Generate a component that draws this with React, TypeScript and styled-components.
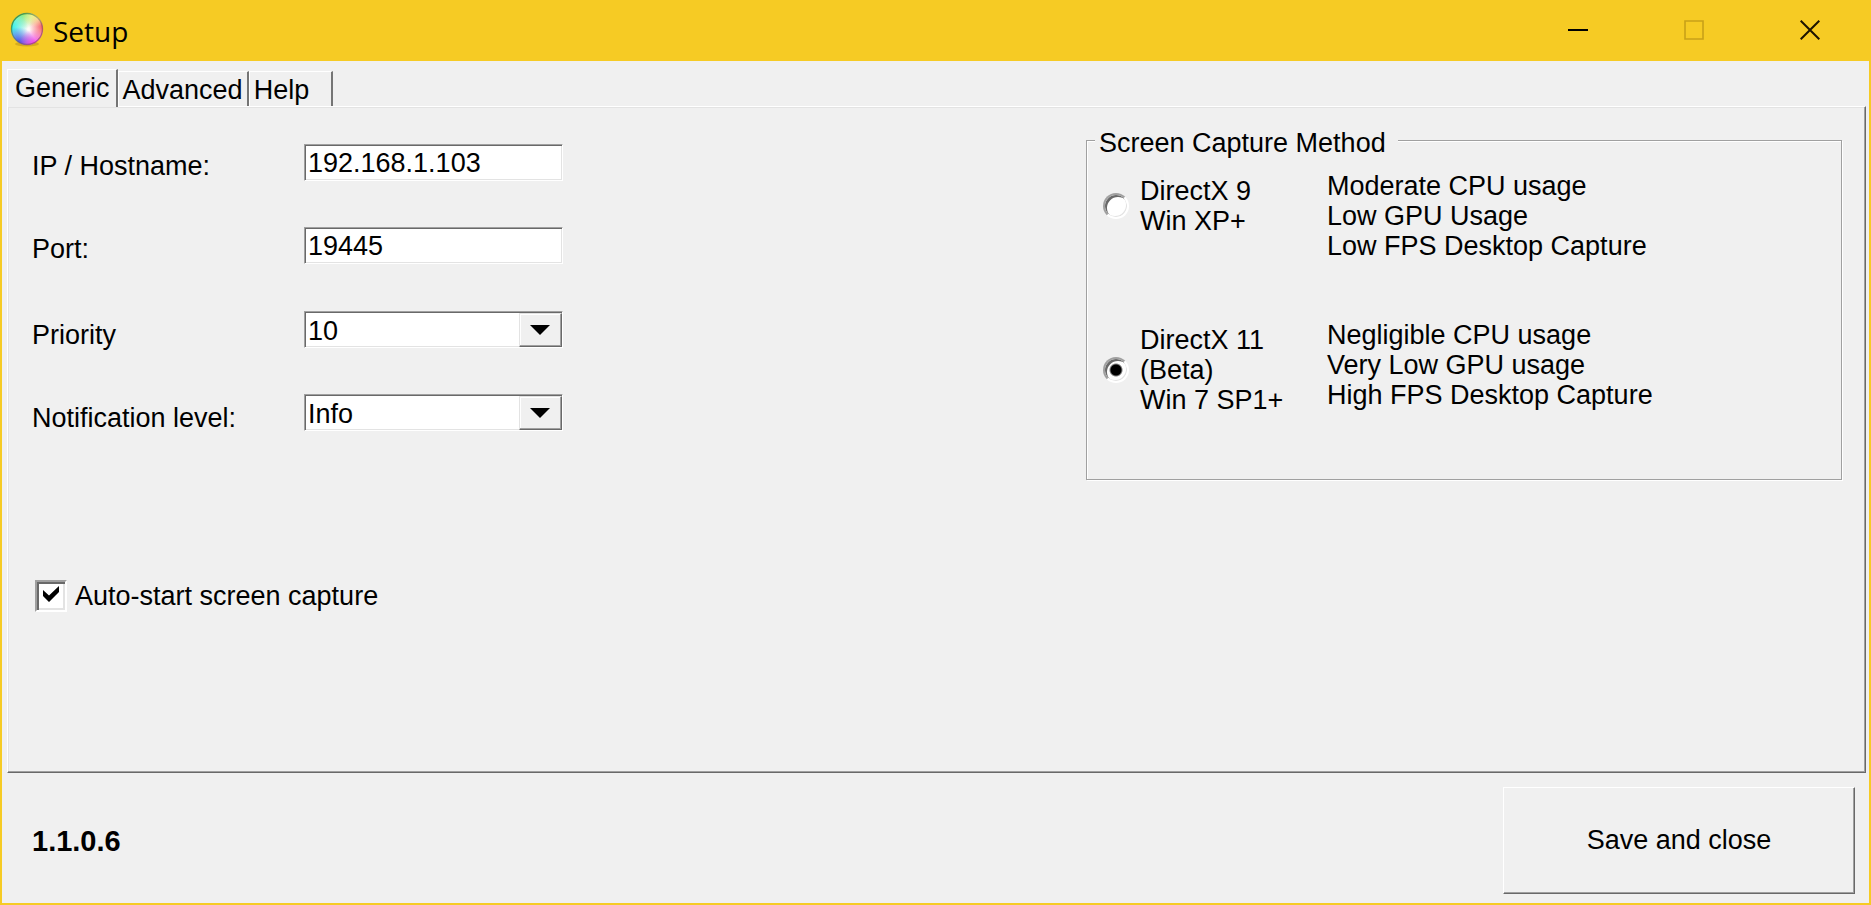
import React, { useState } from "react";
import styled, { createGlobalStyle } from "styled-components";

const face = "#f0f0f0";
const accent = "#f6cb24";
const shadow = "#a0a0a0";
const darkShadow = "#696969";
const light = "#e3e3e3";

const GlobalStyle = createGlobalStyle`
  *, *::before, *::after { box-sizing: border-box; }
  body {
    margin: 0;
    background: ${face};
    color: #000;
    font: 27px/31px "Liberation Sans", Arial, sans-serif;
  }
  button, input, select { font: inherit; color: inherit; border-radius: 0; }
`;

const Window = styled.div`
  display: flex;
  flex-direction: column;
  min-height: 100vh;
  background: ${face};
  border: 2px solid ${accent};
  border-top: 0;
`;

const TitleBar = styled.header`
  display: flex;
  align-items: flex-start;
  height: 61px;
  padding: 0 1px 0 8px;
  background: ${accent};
  & > svg { margin-top: 12px; }
`;

const Title = styled.h1`
  flex: 1;
  margin: 0;
  padding: 12px 0 0 7px;
  font: 400 28px/38px "Open Sans", "Noto Sans", sans-serif;
`;

const CaptionButton = styled.button`
  display: grid;
  place-items: center;
  width: 116px;
  height: 60px;
  padding: 0;
  border: 0;
  background: transparent;
  color: #1c1400;
  &:disabled { color: #c9a118; }
`;

const TabList = styled.div`
  display: flex;
  align-items: flex-end;
  padding: 8px 5px 0;
`;

const Tab = styled.button<{ $selected: boolean }>`
  position: relative;
  z-index: ${(p) => (p.$selected ? 1 : 0)};
  height: ${(p) => (p.$selected ? 38 : 35)}px;
  min-width: 84px;
  margin-bottom: ${(p) => (p.$selected ? -1 : 0)}px;
  padding: ${(p) => (p.$selected ? "3px 6px 0 7px" : "3px 4px 0 4px")};
  display: flex;
  align-items: flex-start;
  background: ${face};
  border: solid;
  border-width: 1px 2px 0 1px;
  border-color: #fff #757575 #fff #fff;
  outline: 0;
`;

const Panel = styled.main`
  flex: 1;
  display: flex;
  justify-content: space-between;
  margin: 0 3px 0 5px;
  padding: 0 23px 20px 24px;
  border: 1px solid;
  border-color: #fff ${darkShadow} ${darkShadow} #fff;
  box-shadow: inset -1px -1px ${shadow}, inset 1px 1px ${light};
`;

const Settings = styled.form`
  padding-top: 37px;
`;

const FieldGroup = styled.div<{ $labelDrop: number }>`
  display: grid;
  grid-template-columns: 272px 259px;
  grid-auto-rows: 37px;
  row-gap: 46px;
  margin-bottom: 47px;
  & > label { padding-top: ${(p) => p.$labelDrop}px; }
`;

const TextBox = styled.input`
  width: 100%;
  height: 37px;
  padding: 2px 3px 0;
  background: #fff;
  border: 1px solid;
  border-color: ${shadow} #fff #fff ${shadow};
  box-shadow: inset 1px 1px ${darkShadow}, inset -1px -1px ${light};
  outline: 0;
`;

const ComboBox = styled.div`
  display: grid;
  grid-template-columns: 1fr;
  & > * { grid-area: 1 / 1; }
`;

const Select = styled.select`
  appearance: none;
  width: 100%;
  height: 37px;
  padding: 3px 46px 0 3px;
  background: #fff;
  border: 1px solid;
  border-color: ${shadow} #fff #fff ${shadow};
  box-shadow: inset 1px 1px ${darkShadow}, inset -1px -1px ${light};
  outline: 0;
`;

const ComboArrow = styled.span`
  z-index: 1;
  justify-self: end;
  display: grid;
  place-items: center;
  width: 43px;
  height: 34px;
  margin: 2px 1px 0 0;
  padding-right: 2px;
  pointer-events: none;
  background: ${face};
  border: 1px solid;
  border-color: ${light} ${darkShadow} ${darkShadow} ${light};
  box-shadow: inset -1px -1px ${shadow}, inset 1px 1px #fff;
`;

const CheckLabel = styled.label`
  display: flex;
  align-items: center;
  gap: 8px;
  margin: 148px 0 0 3px;
  & > span:last-child { padding-top: 2px; }
`;

const CheckSlot = styled.span`
  display: grid;
  place-items: center;
  & > * { grid-area: 1 / 1; }
  svg { z-index: 1; margin-bottom: 3px; pointer-events: none; visibility: hidden; }
  input:checked + svg { visibility: visible; }
`;

const CheckBox = styled.input`
  appearance: none;
  width: 32px;
  height: 32px;
  margin: 0;
  background: #fff;
  border: 2px solid;
  border-color: ${shadow} #fff #fff ${shadow};
  box-shadow: inset 2px 2px ${darkShadow}, inset -2px -2px ${light};
`;

const GroupBox = styled.fieldset`
  flex: 0 1 756px;
  align-self: flex-start;
  min-width: 0;
  margin: 15px 0 0;
  padding: 12px 16px 64px;
  border: 1px solid ${shadow};
  box-shadow: 1px 1px #fff, inset 1px 1px #fff;
`;

const Legend = styled.legend`
  margin-left: -8px;
  padding: 6px 12px 0 4px;
  background: ${face};
`;

const Option = styled.div`
  display: grid;
  grid-template-columns: 224px 1fr;
  align-items: start;
  line-height: 30px;
  white-space: pre-line;
  & + & { margin-top: 59px; }
`;

const OptionLabel = styled.label`
  display: flex;
  align-items: center;
  gap: 11px;
  padding-top: 5px;
`;

const Radio = styled.input`
  appearance: none;
  flex: none;
  width: 26px;
  height: 26px;
  margin: 0;
  border: 2px solid;
  border-color: ${shadow} #fff #fff ${shadow};
  border-radius: 50%;
  background: #fff;
  box-shadow: inset 2px 2px ${darkShadow}, inset -1px -1px ${light};
  &:checked { background: radial-gradient(circle, #000 5px, #fff 7px); }
`;

const Description = styled.p`
  margin: 0;
  min-height: 90px;
`;

const Footer = styled.footer`
  display: flex;
  justify-content: space-between;
  align-items: center;
  padding: 14px 14px 9px 30px;
`;

const Version = styled.strong`
  padding-top: 2px;
  font-size: 29px;
`;

const SaveButton = styled.button`
  width: 352px;
  height: 107px;
  padding: 0;
  background: ${face};
  border: 1px solid;
  border-color: #fff ${darkShadow} ${darkShadow} #fff;
  box-shadow: inset -1px -1px ${shadow};
`;

const ballTints = [
  { id: "green", cx: 13, cy: 0, r: 17, color: "#70e868" },
  { id: "cyan", cx: 0, cy: 15, r: 18, color: "#18f0e4" },
  { id: "blue", cx: 8, cy: 33, r: 18, color: "#2030e0" },
  { id: "magenta", cx: 25, cy: 34, r: 17, color: "#f020e4" },
  { id: "red", cx: 36, cy: 14, r: 17, color: "#f43040" },
  { id: "yellow", cx: 25, cy: 2, r: 13, color: "#f8f080" },
];

const ColorBall = () => (
  <svg width="36" height="36" viewBox="0 0 36 36" aria-hidden="true">
    <defs>
      {ballTints.map((t) => (
        <radialGradient key={t.id} id={t.id} gradientUnits="userSpaceOnUse" cx={t.cx} cy={t.cy} r={t.r}>
          <stop offset="0" stopColor={t.color} />
          <stop offset=".4" stopColor={t.color} stopOpacity=".6" />
          <stop offset="1" stopColor={t.color} stopOpacity="0" />
        </radialGradient>
      ))}
      <linearGradient id="rim" x1="0" y1="0" x2="1" y2="1">
        <stop offset="0" stopColor="#1c8a40" />
        <stop offset=".5" stopColor="#6a7a40" stopOpacity=".5" />
        <stop offset="1" stopColor="#a02070" stopOpacity=".7" />
      </linearGradient>
    </defs>
    <ellipse cx="17" cy="32" rx="12" ry="2.500" fill="#8a6810" opacity=".3" />
    <circle cx="17" cy="17" r="16" fill="#fffaf8" />
    {ballTints.map((t) => (
      <circle key={t.id} cx="17" cy="17" r="16" fill={`url(#${t.id})`} />
    ))}
    <circle cx="17" cy="17" r="15.500" fill="none" stroke="url(#rim)" strokeWidth="1.4" />
  </svg>
);

const Arrow = () => (
  <svg width="20" height="10" viewBox="0 0 20 10" aria-hidden="true">
    <path d="M0 0H20L10 10Z" fill="#000" />
  </svg>
);

const methods = [
  {
    id: "dx9",
    name: "DirectX 9\nWin XP+",
    detail: "Moderate CPU usage\nLow GPU Usage\nLow FPS Desktop Capture",
  },
  {
    id: "dx11",
    name: "DirectX 11\n(Beta)\nWin 7 SP1+",
    detail: "Negligible CPU usage\nVery Low GPU usage\nHigh FPS Desktop Capture",
  },
];

const tabs = ["Generic", "Advanced", "Help"];

export default function App() {
  const [tab, setTab] = useState("Generic");
  const [method, setMethod] = useState("dx11");

  return (
    <>
      <GlobalStyle />
      <Window>
        <TitleBar>
          <ColorBall />
          <Title>Setup</Title>
          <CaptionButton type="button" aria-label="Minimize">
            <svg width="20" height="20" viewBox="0 0 20 20"><path d="M0 10H20" stroke="#000" strokeWidth="2" /></svg>
          </CaptionButton>
          <CaptionButton type="button" aria-label="Maximize" disabled>
            <svg width="20" height="20" viewBox="0 0 20 20"><path d="M1 1H19V19H1Z" fill="none" stroke="currentColor" strokeWidth="1.6" /></svg>
          </CaptionButton>
          <CaptionButton type="button" aria-label="Close">
            <svg width="20" height="20" viewBox="0 0 20 20"><path d="M.7 .7L19.3 19.3M19.3 .7L.7 19.3" stroke="currentColor" strokeWidth="2" /></svg>
          </CaptionButton>
        </TitleBar>

        <TabList role="tablist">
          {tabs.map((name) => (
            <Tab
              key={name}
              type="button"
              role="tab"
              aria-selected={tab === name}
              $selected={tab === name}
              onClick={() => setTab(name)}
            >
              {name}
            </Tab>
          ))}
        </TabList>

        <Panel role="tabpanel" aria-label={tab}>
          {tab === "Generic" && (
            <>
              <Settings id="settings" onSubmit={(e) => e.preventDefault()}>
                <FieldGroup $labelDrop={7}>
                  <label htmlFor="host">IP / Hostname:</label>
                  <TextBox id="host" defaultValue="192.168.1.103" />
                  <label htmlFor="port">Port:</label>
                  <TextBox id="port" defaultValue="19445" />
                </FieldGroup>
                <FieldGroup $labelDrop={9}>
                  <label htmlFor="priority">Priority</label>
                  <ComboBox>
                    <Select id="priority" defaultValue="10">
                      <option>10</option>
                    </Select>
                    <ComboArrow><Arrow /></ComboArrow>
                  </ComboBox>
                  <label htmlFor="level">Notification level:</label>
                  <ComboBox>
                    <Select id="level" defaultValue="Info">
                      <option>Info</option>
                    </Select>
                    <ComboArrow><Arrow /></ComboArrow>
                  </ComboBox>
                </FieldGroup>
                <CheckLabel>
                  <CheckSlot>
                    <CheckBox type="checkbox" defaultChecked />
                    <svg width="16" height="16" viewBox="0 0 16 16" aria-hidden="true">
                      <path d="M0 4L6 9.500L16 0V6L6 16L0 10Z" fill="#000" />
                    </svg>
                  </CheckSlot>
                  <span>Auto-start screen capture</span>
                </CheckLabel>
              </Settings>

              <GroupBox>
                <Legend>Screen Capture Method</Legend>
                {methods.map((m) => (
                  <Option key={m.id}>
                    <OptionLabel>
                      <Radio
                        type="radio"
                        name="method"
                        checked={method === m.id}
                        onChange={() => setMethod(m.id)}
                      />
                      <span>{m.name}</span>
                    </OptionLabel>
                    <Description>{m.detail}</Description>
                  </Option>
                ))}
              </GroupBox>
            </>
          )}
        </Panel>

        <Footer>
          <Version>1.1.0.6</Version>
          <SaveButton type="submit" form="settings">Save and close</SaveButton>
        </Footer>
      </Window>
    </>
  );
}
